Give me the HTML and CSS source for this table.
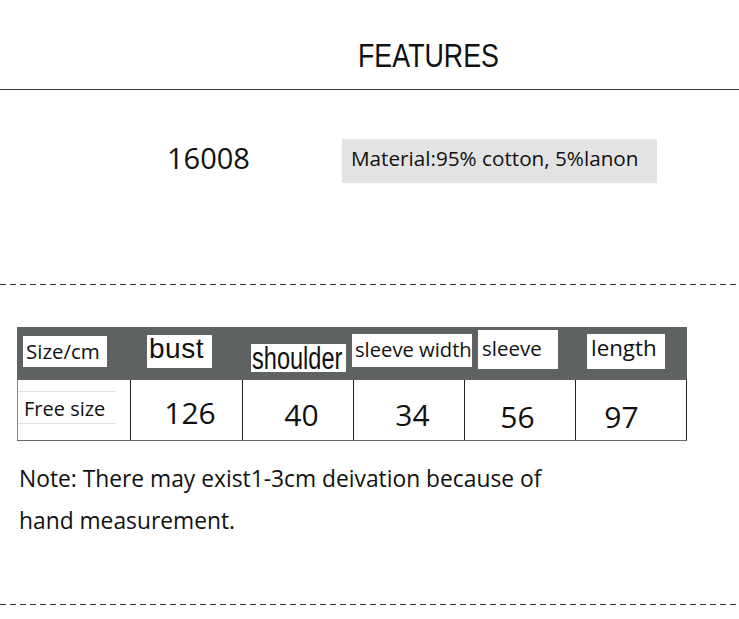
FILE: index.html
```html
<!DOCTYPE html>
<html>
<head>
<meta charset="utf-8">
<link rel="stylesheet" href="styles.css">
</head>
<body>
<header class="title-bar">
  <h1 class="title">FEATURES</h1>
</header>
<section class="spec">
  <div class="model">16008</div>
  <div class="material">Material:95% cotton, 5%lanon</div>
</section>
<div class="dash"></div>
<section class="size-table">
  <div class="head-row">
    <span class="lbl lbl-size">Size/cm</span>
    <span class="lbl lbl-bust"><span class="t">bust</span></span>
    <span class="lbl lbl-shoulder"><span class="t narrow">shoulder</span></span>
    <span class="lbl lbl-sw">sleeve width</span>
    <span class="lbl lbl-sleeve">sleeve</span>
    <span class="lbl lbl-length"><span class="t">length</span></span>
  </div>
  <div class="body-row">
    <div class="cell cell-first"><span class="free">Free size</span></div>
    <div class="cell num n1">126</div>
    <div class="cell num n2">40</div>
    <div class="cell num n3">34</div>
    <div class="cell num n4">56</div>
    <div class="cell num n5">97</div>
  </div>
</section>
<p class="note">Note: There may exist1-3cm deivation because of<br>hand measurement.</p>
<div class="dash"></div>
</body>
</html>
```
FILE: styles.css
```css
html, body {
  margin: 0;
  padding: 0;
  background: #fff;
}
body {
  width: 739px;
  height: 619px;
  overflow: hidden;
  font-family: "Open Sans", "Noto Sans", sans-serif;
  color: #111;
}
.title-bar {
  height: 89px;
  border-bottom: 1px solid #3a3a3a;
}
.title {
  display: inline-block;
  margin: 38px 0 0 358px;
  font-family: "Liberation Sans", Arial, sans-serif;
  font-weight: normal;
  font-size: 33.5px;
  line-height: 36px;
  color: #111;
  transform: scaleX(0.8);
  transform-origin: left top;
}
.spec {
  height: 194px;
  display: flex;
  align-items: flex-start;
}
.model {
  margin: 50px 0 0 167px;
  width: 175px;
  font-size: 29px;
  line-height: 36px;
}
.material {
  margin-top: 49px;
  width: 315px;
  height: 44px;
  padding-left: 9px;
  box-sizing: border-box;
  background: #e3e3e3;
  font-size: 20.7px;
  line-height: 38px;
  white-space: nowrap;
}
.dash {
  height: 1px;
  background: repeating-linear-gradient(90deg, #333 0 6px, transparent 6px 10px);
}
.size-table {
  margin: 42px 0 0 17px;
  width: 670px;
}
.head-row {
  height: 53px;
  background: #5e6263;
  display: flex;
  align-items: flex-start;
}
.lbl {
  display: block;
  background: #fff;
  color: #111;
  box-sizing: border-box;
  white-space: nowrap;
}
.t {
  display: block;
}
.lbl-size {
  margin: 9px 0 0 6px;
  width: 84px;
  height: 31px;
  padding-left: 3px;
  font-size: 20.5px;
  line-height: 30px;
}
.lbl-bust {
  margin: 8px 0 0 40px;
  width: 65px;
  height: 33px;
  padding-left: 2px;
  font-family: "Liberation Sans", Arial, sans-serif;
  font-size: 28px;
  line-height: 32px;
  letter-spacing: 0.5px;
}
.lbl-bust .t {
  margin-top: -2px;
}
.lbl-shoulder {
  margin: 17px 0 0 39px;
  width: 95px;
  height: 28px;
  padding-left: 1px;
}
.narrow {
  margin-top: -3px;
  font-family: "Liberation Sans", Arial, sans-serif;
  font-size: 31px;
  line-height: 35px;
  transform: scaleX(0.76);
  transform-origin: left top;
}
.lbl-sw {
  margin: 7px 0 0 6px;
  width: 120px;
  height: 33px;
  padding-left: 3px;
  font-size: 20.2px;
  line-height: 31px;
}
.lbl-sleeve {
  margin: 3px 0 0 6px;
  width: 80px;
  height: 39px;
  padding-left: 4px;
  font-size: 20.5px;
  line-height: 37px;
}
.lbl-length {
  margin: 7px 0 0 29px;
  width: 78px;
  height: 35px;
  padding-left: 4px;
  font-size: 22.3px;
  line-height: 31px;
}
.lbl-length .t {
  margin-top: -2px;
}
.body-row {
  display: grid;
  grid-template-columns: 114px 112px 111px 111px 111px 111px;
  height: 61px;
  border-bottom: 1px solid #666;
  box-sizing: border-box;
}
.cell {
  border-right: 1px solid #222;
  box-sizing: border-box;
  height: 60px;
}
.cell-first {
  border-left: 1px solid #888;
  padding-top: 11px;
}
.free {
  display: block;
  width: 92px;
  border-top: 1px solid #e2e2e2;
  border-bottom: 1px solid #e2e2e2;
  padding: 2px 0 0 6px;
  font-size: 20px;
  line-height: 29px;
}
.num {
  font-size: 30px;
  line-height: 36px;
  text-align: center;
}
.n1 { padding: 15px 0 0 7px; }
.n2 { padding: 17px 0 0 7px; }
.n3 { padding: 17px 0 0 7px; }
.n4 { padding: 19px 5px 0 0; }
.n5 { padding: 19px 19px 0 0; }
.note {
  margin: 17px 0 0 19px;
  height: 146px;
  font-size: 22.8px;
  line-height: 42px;
}
```
